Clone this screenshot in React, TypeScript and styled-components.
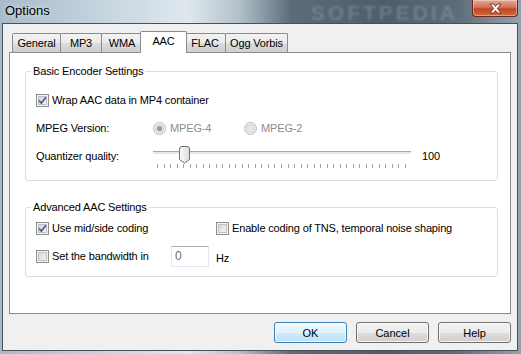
import React from "react";
import styled, { createGlobalStyle } from "styled-components";

const GlobalStyle = createGlobalStyle`
  html, body {
    margin: 0;
    padding: 0;
  }
  body {
    width: 521px;
    height: 354px;
    overflow: hidden;
    font-family: "Liberation Sans", Arial, sans-serif;
    font-size: 11px;
    letter-spacing: -0.15px;
    color: #000;
  }
`;

const Window = styled.div`
  width: 521px;
  height: 354px;
  box-sizing: border-box;
  display: flex;
  flex-direction: column;
  padding: 0 3px 3px 2px;
  background: linear-gradient(
    90deg,
    #a7bac8 0%,
    #c3d2dd 18%,
    #dfe8ef 36%,
    #b2c0ca 46%,
    #5d6b77 56%,
    #4f5d69 74%,
    #5f6d79 88%,
    #93a3af 100%
  );
`;

const TitleBar = styled.div`
  height: 23px;
  display: flex;
  align-items: flex-start;
  justify-content: space-between;
  overflow: hidden;
`;

const Title = styled.span`
  padding: 3px 0 0 3px;
  font-size: 13px;
  letter-spacing: 0;
  color: #000;
  text-shadow: 0 0 6px rgba(255, 255, 255, 0.9);
`;

const Watermark = styled.span`
  margin: 1px 0 0 auto;
  padding-right: 14px;
  font-size: 21px;
  font-weight: bold;
  letter-spacing: 3px;
  color: rgba(170, 185, 198, 0.3);
  filter: blur(1.2px);
`;

const CloseButton = styled.div`
  width: 46px;
  height: 17px;
  box-sizing: border-box;
  display: flex;
  align-items: center;
  justify-content: center;
  border: 1px solid #6b2a1c;
  border-top: none;
  border-radius: 0 0 4px 4px;
  background: linear-gradient(#e9a792 0%, #d2735a 45%, #c1472a 55%, #cf6a3d 100%);
  box-shadow: inset 0 0 0 1px rgba(255, 255, 255, 0.35);
`;

const Client = styled.div`
  flex: 1;
  display: flex;
  flex-direction: column;
  border: 1px solid #44525e;
  background: #f0f0f0;
  padding: 7px 6px 7px 6px;
`;

const TabStrip = styled.div`
  height: 21px;
  display: flex;
  align-items: flex-end;
  padding-left: 3px;
  position: relative;
  z-index: 1;
`;

const Tab = styled.div<{ $w: number; $active?: boolean }>`
  width: ${(p) => p.$w}px;
  height: ${(p) => (p.$active ? 22 : 19)}px;
  box-sizing: border-box;
  display: flex;
  justify-content: center;
  align-items: ${(p) => (p.$active ? "flex-start" : "center")};
  padding-top: ${(p) => (p.$active ? 3 : 0)}px;
  margin: 0 ${(p) => (p.$active ? -3 : -1)}px ${(p) => (p.$active ? -1 : 0)}px
    ${(p) => (p.$active ? -2 : 0)}px;
  border: 1px solid #898c95;
  border-bottom: none;
  border-radius: 2px 2px 0 0;
  position: relative;
  z-index: ${(p) => (p.$active ? 2 : 1)};
  background: ${(p) =>
    p.$active ? "#fff" : "linear-gradient(#f2f2f2 0%, #ebebeb 50%, #dddddd 51%, #cfcfcf 100%)"};
`;

const Panel = styled.div`
  height: 262px;
  box-sizing: border-box;
  border: 1px solid #898c95;
  background: #fff;
  padding: 11px 12px 0 15px;
  display: flex;
  flex-direction: column;
  gap: 19px;
`;

const Group = styled.fieldset<{ $cols: string; $bottom: number; $top: number }>`
  margin: 0;
  min-width: 0;
  border: 1px solid #d5dfe5;
  border-radius: 3px;
  padding: ${(p) => p.$top}px 10px ${(p) => p.$bottom}px 10px;
  display: grid;
  grid-template-columns: ${(p) => p.$cols};
  grid-auto-rows: 28px;
  align-items: center;
`;

const Legend = styled.legend`
  line-height: 14px;
  padding: 0 2px;
  margin-left: -5px;
`;

const Option = styled.label<{ $span?: number }>`
  display: flex;
  align-items: center;
  gap: 3px;
  grid-column: span ${(p) => p.$span ?? 1};
`;

const RadioOption = styled.label<{ $disabled?: boolean }>`
  width: 91px;
  display: flex;
  align-items: center;
  gap: 4px;
  color: ${(p) => (p.$disabled ? "#8d8d8d" : "#000")};
`;

const Cell = styled.div`
  display: flex;
  align-items: center;
`;

const Slider = styled.div`
  width: 258px;
  height: 28px;
  position: relative;
`;

const Track = styled.div`
  position: absolute;
  left: 0;
  right: 0;
  top: 9px;
  height: 3px;
  box-sizing: border-box;
  border-top: 1px solid #a9a9a9;
  background: #e6e8e8;
`;

const Thumb = styled.svg`
  position: absolute;
  left: 26px;
  top: 4px;
`;

const Ticks = styled.svg`
  position: absolute;
  left: 4px;
  top: 22px;
`;

const SliderValue = styled.span`
  margin-left: 11px;
`;

const NumberBox = styled.div`
  width: 38px;
  height: 21px;
  box-sizing: border-box;
  border: 1px solid #e3e9ef;
  border-top-color: #abadb3;
  padding: 0 3px;
  display: flex;
  align-items: center;
  color: #6d6d6d;
  background: #fff;
  font-size: 12px;
`;

const Unit = styled.span`
  padding-top: 4px;
`;

const ButtonRow = styled.div`
  margin-top: 8px;
  display: flex;
  justify-content: flex-end;
  gap: 9px;
`;

const Button = styled.button<{ $primary?: boolean }>`
  width: 73px;
  height: 21px;
  font: inherit;
  font-size: 11px;
  color: #000;
  padding: 0;
  border-radius: 3px;
  border: 1px solid ${(p) => (p.$primary ? "#3c7fb1" : "#707070")};
  background: ${(p) =>
    p.$primary
      ? "linear-gradient(#eef8fe 0%, #e1f3fd 50%, #cdebfc 51%, #bde3f8 100%)"
      : "linear-gradient(#f2f2f2 0%, #ebebeb 50%, #dddddd 51%, #cfcfcf 100%)"};
  box-shadow: inset 0 0 0 1px rgba(255, 255, 255, 0.7);
`;

const CheckBox = ({ checked }: { checked?: boolean }) => (
  <svg width="13" height="13" viewBox="0 0 13 13">
    <defs>
      <linearGradient id="cbfill" x1="0" y1="0" x2="1" y2="1">
        <stop offset="0" stopColor="#d4d4d4" />
        <stop offset="1" stopColor="#f7f7f7" />
      </linearGradient>
    </defs>
    <rect x="0.5" y="0.5" width="12" height="12" fill="#f4f4f4" stroke="#8e8f8f" />
    <rect x="2.5" y="2.5" width="8" height="8" fill="url(#cbfill)" stroke="#c2c2c2" />
    {checked && (
      <path d="M3 6.5 L5.3 9 L10 3.2" fill="none" stroke="#4a5f97" strokeWidth="1.8" />
    )}
  </svg>
);

const Radio = ({ checked }: { checked?: boolean }) => (
  <svg width="13" height="13" viewBox="0 0 13 13">
    <circle cx="6.5" cy="6.5" r="6" fill="#f4f4f4" stroke="#b9b9b9" />
    <circle cx="6.5" cy="6.5" r="4" fill="#e6e6e6" stroke="#d0d0d0" />
    {checked && <circle cx="6.5" cy="6.5" r="2.6" fill="#9e9e9e" />}
  </svg>
);

const tabs = [
  { label: "General", w: 49 },
  { label: "MP3", w: 42 },
  { label: "WMA", w: 42 },
  { label: "AAC", w: 47, active: true },
  { label: "FLAC", w: 42 },
  { label: "Ogg Vorbis", w: 63 },
];

const tickCount = 39;

export default function App() {
  return (
    <>
      <GlobalStyle />
      <Window>
        <TitleBar>
          <Title>Options</Title>
          <Watermark>SOFTPEDIA</Watermark>
          <CloseButton>
            <svg width="13" height="11" viewBox="0 0 13 11">
              <path
                d="M1 1 H4.5 L6.5 3.5 L8.5 1 H12 L8.3 5.5 L12 10 H8.5 L6.5 7.5 L4.5 10 H1 L4.7 5.5 Z"
                fill="#fff"
                stroke="#5a2418"
                strokeWidth="0.8"
              />
            </svg>
          </CloseButton>
        </TitleBar>
        <Client>
          <TabStrip>
            {tabs.map((t) => (
              <Tab key={t.label} $w={t.w} $active={t.active}>
                {t.label}
              </Tab>
            ))}
          </TabStrip>
          <Panel>
            <Group $cols="117px 1fr" $top={8} $bottom={10}>
              <Legend>Basic Encoder Settings</Legend>
              <Option $span={2}>
                <CheckBox checked />
                Wrap AAC data in MP4 container
              </Option>
              <span>MPEG Version:</span>
              <Cell>
                <RadioOption $disabled>
                  <Radio checked />
                  MPEG-4
                </RadioOption>
                <RadioOption $disabled>
                  <Radio />
                  MPEG-2
                </RadioOption>
              </Cell>
              <span>Quantizer quality:</span>
              <Cell>
                <Slider>
                  <Track />
                  <Thumb width="11" height="18" viewBox="0 0 11 18">
                    <defs>
                      <linearGradient id="thumbfill" x1="0" y1="0" x2="1" y2="0">
                        <stop offset="0" stopColor="#fbfbfb" />
                        <stop offset="1" stopColor="#dcdcdc" />
                      </linearGradient>
                    </defs>
                    <path
                      d="M0.5 3 Q0.5 0.5 3 0.5 H8 Q10.5 0.5 10.5 3 V13.5 L5.5 17.2 L0.5 13.5 Z"
                      fill="url(#thumbfill)"
                      stroke="#707070"
                    />
                  </Thumb>
                  <Ticks width="250" height="4" viewBox="0 0 250 4">
                    {Array.from({ length: tickCount }, (_, i) => {
                      const x = Math.round((i * 248) / (tickCount - 1)) + 0.5;
                      return <line key={i} x1={x} x2={x} y1="0" y2="4" stroke="#a4a4a4" />;
                    })}
                  </Ticks>
                </Slider>
                <SliderValue>100</SliderValue>
              </Cell>
            </Group>
            <Group $cols="135px 45px 1fr" $top={0} $bottom={6}>
              <Legend>Advanced AAC Settings</Legend>
              <Option $span={2}>
                <CheckBox checked />
                Use mid/side coding
              </Option>
              <Option>
                <CheckBox />
                Enable coding of TNS, temporal noise shaping
              </Option>
              <Option>
                <CheckBox />
                Set the bandwidth in
              </Option>
              <NumberBox>0</NumberBox>
              <Unit>Hz</Unit>
            </Group>
          </Panel>
          <ButtonRow>
            <Button $primary>OK</Button>
            <Button>Cancel</Button>
            <Button>Help</Button>
          </ButtonRow>
        </Client>
      </Window>
    </>
  );
}
